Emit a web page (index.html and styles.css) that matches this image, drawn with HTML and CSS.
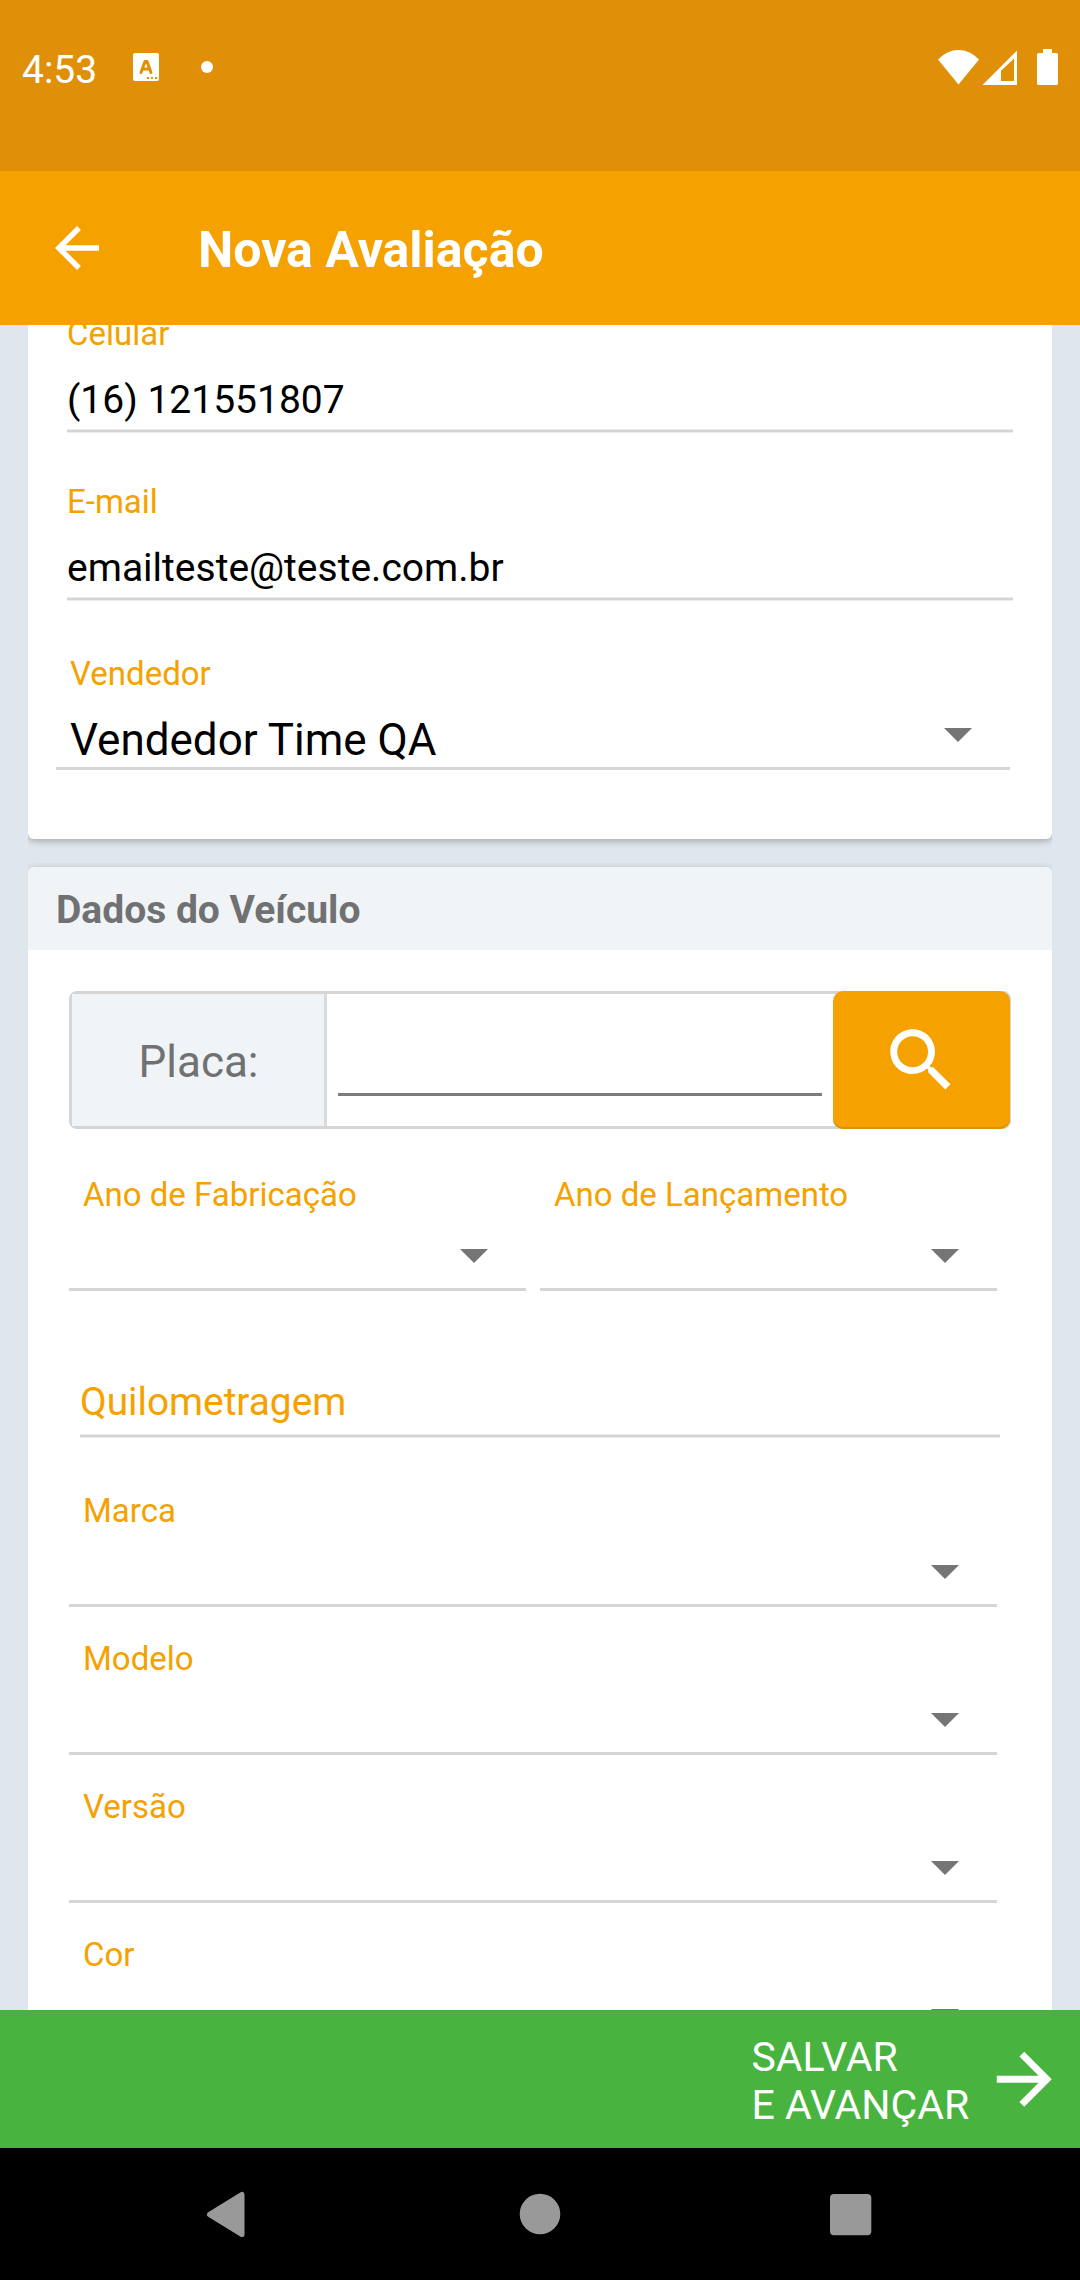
FILE: index.html
```html
<!DOCTYPE html>
<html lang="pt-BR">
<head>
<meta charset="utf-8">
<title>Nova Avaliação</title>
<link rel="stylesheet" href="styles.css">
</head>
<body>
<div class="screen">
  <div class="status-bar">
    <span class="clock">4:53</span>
    <svg class="app-badge" viewBox="0 0 26 28"><rect width="26" height="28" rx="2" fill="#fff"/><path d="M8 19.5 12 8.5h2l4 11M9.8 16h6.4" fill="none" stroke="#df9008" stroke-width="3" stroke-linecap="round" stroke-linejoin="round"/><path d="M14 25h2M18 25h2M22 25h2" stroke="#df9008" stroke-width="2"/></svg>
    <span class="dot"></span>
    <svg class="signals" viewBox="0 0 122 38" fill="#fff">
      <path d="M0 11.5Q9 2 20.5 2T41 11.5L20.5 36.5Z"/>
      <path fill-rule="evenodd" d="M44.5 37 79 2.5V37ZM63 22.8V33H76V10.5Z"/>
      <path d="M105 1h9v4h4.500q1.500 0 1.500 1.500v29q0 1.500-1.500 1.500h-18q-1.500 0-1.500-1.500v-29q0-1.500 1.500-1.500H105Z"/>
    </svg>
  </div>

  <header class="app-bar">
    <svg class="back" viewBox="0 0 24 24" fill="#fff"><path d="M20 11H7.830l5.590-5.590L12 4l-8 8 8 8 1.410-1.410L7.830 13H20v-2z"/></svg>
    <h1 class="title">Nova Avaliação</h1>
  </header>

  <main class="content">
    <section class="card contact">
      <div class="field">
        <div class="label">Celular</div>
        <div class="value">(16) 121551807</div>
        <div class="rule"></div>
      </div>
      <div class="field">
        <div class="label">E-mail</div>
        <div class="value">emailteste@teste.com.br</div>
        <div class="rule"></div>
      </div>
      <div class="spinner seller">
        <div class="label">Vendedor</div>
        <div class="choice">Vendedor Time QA<i class="caret"></i></div>
      </div>
    </section>

    <section class="card vehicle">
      <h2 class="card-head">Dados do Veículo</h2>
      <div class="plate">
        <div class="plate-label">Placa:</div>
        <div class="plate-input"></div>
        <div class="plate-button">
          <svg viewBox="0 0 24 24" fill="#fff"><path d="M15.500 14h-.790l-.280-.270C15.410 12.590 16 11.110 16 9.500 16 5.910 13.090 3 9.500 3S3 5.910 3 9.500 5.910 16 9.500 16c1.610 0 3.090-.590 4.230-1.570l.270.280v.790l5 4.990L20.490 19l-4.990-5zm-6 0C7.010 14 5 11.990 5 9.500S7.010 5 9.500 5 14 7.010 14 9.500 11.990 14 9.500 14z"/></svg>
        </div>
      </div>
      <div class="years">
        <div class="spinner"><div class="label">Ano de Fabricação</div><div class="choice"><i class="caret"></i></div></div>
        <div class="spinner"><div class="label">Ano de Lançamento</div><div class="choice"><i class="caret"></i></div></div>
      </div>
      <div class="mileage">
        <div class="hint">Quilometragem</div>
        <div class="rule"></div>
      </div>
      <div class="specs">
        <div class="spinner"><div class="label">Marca</div><div class="choice"><i class="caret"></i></div></div>
        <div class="spinner"><div class="label">Modelo</div><div class="choice"><i class="caret"></i></div></div>
        <div class="spinner"><div class="label">Versão</div><div class="choice"><i class="caret"></i></div></div>
        <div class="spinner"><div class="label">Cor</div><div class="choice"><i class="caret"></i></div></div>
      </div>
    </section>
  </main>

  <div class="save-bar">
    <div class="save-text">SALVAR<br>E AVANÇAR</div>
    <svg class="forward" viewBox="0 0 24 24" fill="#fff"><path d="M12 4l-1.410 1.410L16.170 11H4v2h12.170l-5.580 5.590L12 20l8-8z"/></svg>
  </div>

  <nav class="nav-bar">
    <svg viewBox="0 0 60 60"><path d="M13 30 45.500 10V50Z" transform="translate(-3.500 .5)" fill="#999" stroke="#999" stroke-width="5" stroke-linejoin="round"/></svg>
    <svg viewBox="0 0 60 60"><circle cx="30" cy="30" r="20.300" fill="#999"/></svg>
    <svg viewBox="0 0 60 60"><rect x="10" y="10" width="41.300" height="41.300" rx="4" fill="#999"/></svg>
  </nav>
</div>
</body>
</html>
```
FILE: styles.css
```css
* { box-sizing: border-box; }
body { margin: 0; font-family: Roboto, sans-serif; }
svg { display: block; flex: none; }

.screen { width: 1080px; height: 2280px; display: flex; flex-direction: column; overflow: hidden; }

.status-bar { height: 171px; flex: none; background: #df9008; display: flex; align-items: flex-start; padding: 44px 20px 0 22px; }
.clock { width: 111px; font-size: 39px; line-height: 50px; color: #fff; padding-top: 1px; }
.app-badge { width: 26px; height: 28px; margin-top: 9px; }
.dot { width: 12px; height: 12px; margin: 17px 0 0 42px; border-radius: 50%; background: #fff; }
.signals { width: 122px; height: 38px; margin: 4px 0 0 auto; }

.app-bar { height: 154px; flex: none; background: #f5a100; display: flex; align-items: center; padding-left: 44px; }
.back { width: 66px; height: 66px; }
.title { margin: 4px 0 0 88px; font-size: 50px; font-weight: 700; line-height: 60px; color: #fff; }

.content { flex: 1; min-height: 0; overflow: hidden; background: #dfe6ed; padding: 0 28px; }
.card { background: #fff; border-radius: 6px; box-shadow: 0 2px 7px rgba(40, 50, 40, .34); clip-path: inset(-4px 0 -12px 0); }
.label { font-size: 33px; line-height: 40px; height: 40px; color: #f5a100; }
.rule { height: 4px; background: #d4d4d4; border-top: 1px solid #ececec; border-bottom: 1px solid #ececec; }

.contact { margin-top: -11px; padding-bottom: 69px; }
.field { margin: 0 39px 49px; }
.value { margin-top: 23px; height: 52px; font-size: 39px; line-height: 46px; color: #000; }

.spinner { border-bottom: 3px solid #d5d5d5; padding-left: 14px; }
.choice { height: 73px; display: flex; align-items: flex-start; justify-content: flex-end; padding: 34px 38px 0 0; }
.caret { width: 0; height: 0; border: 14px solid transparent; border-top-color: #757575; border-bottom: 0; }
.seller { margin: 53px 42px 0 28px; padding-left: 14px; }
.seller .choice { justify-content: space-between; padding-top: 20px; line-height: 52px; font-size: 44px; color: #000; }
.seller .caret { margin-top: 14px; }

.vehicle { margin-top: 28px; height: 1300px; }
.card-head { margin: 0; height: 83px; padding: 2px 0 0 28px; border-radius: 6px 6px 0 0; background: #f0f4f7; font-size: 39px; font-weight: 700; line-height: 83px; color: #707173; }

.plate { display: flex; height: 138px; margin: 41px 41px 0; border: 3px solid #d5d5d5; border-radius: 8px; }
.plate-label { width: 255px; border-right: 3px solid #d9dadb; background: #f0f4f7; text-align: center; font-size: 44px; line-height: 132px; padding: 2px 0 0 1px; color: #707173; }
.plate-input { flex: 1; height: 102px; margin: 0 11px; border-bottom: 3px solid #7c7c7c; }
.plate-button { width: 177px; height: 138px; margin: -3px -2px 0 0; display: flex; align-items: center; justify-content: center; border-radius: 10px; background: #f5a100; box-shadow: inset 0 -2px 0 #df9008; }
.plate-button svg { width: 82.5px; height: 82.5px; }

.years { display: grid; grid-template-columns: 457px 457px; gap: 14px; margin: 46px 0 0 41px; }
.mileage { margin: 88px 52px 0; }
.hint { height: 55px; font-size: 38.8px; line-height: 46px; color: #f5a100; }
.specs { display: grid; gap: 32px; margin: 53px 55px 0 41px; }

.save-bar { height: 138px; flex: none; background: #48b43f; display: flex; align-items: center; justify-content: flex-end; padding-right: 15px; }
.save-text { width: 231px; padding-top: 3px; font-size: 41px; line-height: 48px; color: #fff; }
.forward { width: 82.5px; height: 82.5px; }

.nav-bar { height: 132px; flex: none; background: #000; display: flex; align-items: center; justify-content: center; gap: 250px; }
.nav-bar svg { width: 60px; height: 60px; }
```
